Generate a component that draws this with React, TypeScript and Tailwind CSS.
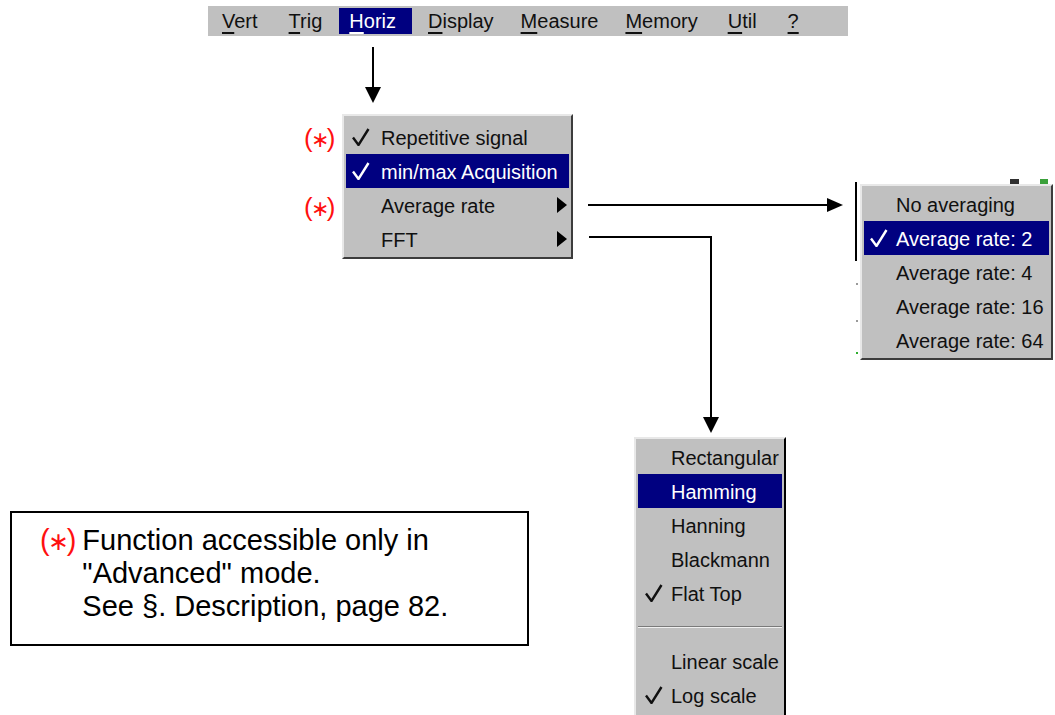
import React from "react";

type Item = {
  label: string;
  checked?: boolean;
  active?: boolean;
  arrow?: boolean;
};

const Check = ({ white }: { white?: boolean }) => (
  <svg width="18" height="18" viewBox="0 0 18 18">
    <path
      d="M1 9.5 L6.5 17 L16.5 1"
      fill="none"
      stroke={white ? "#ffffff" : "#101010"}
      strokeWidth="2.4"
    />
  </svg>
);

const Row = ({ item, gutter, pad }: { item: Item; gutter: string; pad: string }) => (
  <div
    className={
      "flex h-[34px] items-center leading-[34px] " +
      (item.active ? "bg-[#000080] text-white" : "text-[#101010]")
    }
  >
    <div className={"flex shrink-0 items-center " + gutter + " " + pad}>
      {item.checked && <Check white={item.active} />}
    </div>
    <span className="flex-1 whitespace-pre pt-[2px]">{item.label}</span>
    {item.arrow && (
      <svg width="10" height="16" viewBox="0 0 10 16" className="mr-[2px]">
        <path d="M0 0 L10 8 L0 16 Z" fill="#000" />
      </svg>
    )}
  </div>
);

const bevel =
  "absolute border-2 border-t-[#e8e8e8] border-l-[#e8e8e8] border-r-[#3c3c3c] border-b-[#3c3c3c] bg-[#c0c0c0]";

const horizMenu: Item[] = [
  { label: "Repetitive signal", checked: true },
  { label: "min/max Acquisition", checked: true, active: true },
  { label: "Average rate", arrow: true },
  { label: "FFT", arrow: true },
];

const averageMenu: Item[] = [
  { label: "No averaging" },
  { label: "Average rate: 2", checked: true, active: true },
  { label: "Average rate: 4" },
  { label: "Average rate: 16" },
  { label: "Average rate: 64" },
];

const fftWindows: Item[] = [
  { label: "Rectangular" },
  { label: "Hamming", active: true },
  { label: "Hanning" },
  { label: "Blackmann" },
  { label: "Flat Top", checked: true },
];

const fftScales: Item[] = [
  { label: "Linear scale" },
  { label: "Log scale", checked: true },
];

// red "(*)" marker, asterisk centred like in the manual
const Star = ({ className }: { className: string }) => (
  <span className={"whitespace-nowrap text-[#ff1010] " + className}>
    (<span className="mx-[-2px] text-[0.85em]">∗</span>)
  </span>
);

const MenuBar = () => (
  <div className="absolute left-[208px] top-[6px] flex h-[30px] w-[640px] items-center bg-[#c0c0c0] pl-[14px] text-[20px] leading-[26px] text-[#101010]">
    <span>
      <u className="decoration-2 underline-offset-[4px]">V</u>ert
    </span>
    <span className="ml-[31px]">
      <u className="decoration-2 underline-offset-[4px]">T</u>rig
    </span>
    <span className="ml-[17px] bg-[#000080] pl-[10px] pr-[16px] text-white">
      <u className="decoration-2 underline-offset-[4px]">H</u>oriz
    </span>
    <span className="ml-[16px]">
      <u className="decoration-2 underline-offset-[4px]">D</u>isplay
    </span>
    <span className="ml-[27px]">
      <u className="decoration-2 underline-offset-[4px]">M</u>easure
    </span>
    <span className="ml-[27px]">
      <u className="decoration-2 underline-offset-[4px]">M</u>emory
    </span>
    <span className="ml-[30px]">
      <u className="decoration-2 underline-offset-[4px]">U</u>til
    </span>
    <span className="ml-[31px]">
      <u className="decoration-2 underline-offset-[4px]">?</u>
    </span>
  </div>
);

const Connectors = () => (
  <svg className="pointer-events-none absolute left-0 top-0" width="1055" height="715">
    <g stroke="#000" strokeWidth="2" fill="none">
      <line x1="373" y1="47" x2="373" y2="88" />
      <line x1="588" y1="205" x2="829" y2="205" />
      <polyline points="589,237 711,237 711,419" />
    </g>
    <g fill="#000">
      <path d="M365 87 L381 87 L373 103 Z" />
      <path d="M827 198 L843 205 L827 212 Z" />
      <path d="M703 417 L719 417 L711 433 Z" />
    </g>
  </svg>
);

export default function App() {
  return (
    <div className="relative h-[715px] w-[1055px] overflow-hidden bg-white font-['Liberation_Sans',Arial,sans-serif]">
      <MenuBar />

      <Star className="absolute left-[304px] top-[125px] text-[26px] leading-[26px]" />
      <Star className="absolute left-[304px] top-[194px] text-[26px] leading-[26px]" />

      <div className={bevel + " left-[342px] top-[114px] h-[145px] w-[231px] px-[2px] pt-[4px] text-[20px]"}>
        {horizMenu.map((it) => (
          <Row key={it.label} item={it} gutter="w-[35px]" pad="pl-[6px]" />
        ))}
      </div>

      {/* bits of the scope screen behind the sub-menu */}
      <div className="absolute left-[855px] top-[182px] h-[79px] w-[2px] bg-black" />
      <div className="absolute left-[856px] top-[283px] h-[2px] w-[2px] bg-[#9a9a9a]" />
      <div className="absolute left-[856px] top-[320px] h-[2px] w-[2px] bg-[#9a9a9a]" />
      <div className="absolute left-[856px] top-[352px] h-[2px] w-[2px] bg-[#2fae2f]" />
      <div className="absolute left-[1010px] top-[179px] h-[5px] w-[9px] bg-[#303030]" />
      <div className="absolute left-[1040px] top-[179px] h-[5px] w-[8px] bg-[#3aa03a]" />

      <div className={bevel + " left-[860px] top-[184px] h-[176px] w-[193px] px-[2px] pt-[1px] text-[20px]"}>
        {averageMenu.map((it) => (
          <Row key={it.label} item={it} gutter="w-[32px]" pad="pl-[6px]" />
        ))}
      </div>

      <div className={bevel + " left-[634px] top-[437px] h-[300px] w-[152px] border-r-black px-[2px] pt-[1px] text-[20px]"}>
        {fftWindows.map((it) => (
          <Row key={it.label} item={it} gutter="w-[33px]" pad="pl-[7px]" />
        ))}
        <div className="flex h-[34px] flex-col justify-center">
          <div className="h-[2px] border-t border-t-[#7a7a7a] border-b border-b-[#f0f0f0]" />
        </div>
        {fftScales.map((it) => (
          <Row key={it.label} item={it} gutter="w-[33px]" pad="pl-[7px]" />
        ))}
      </div>

      <Connectors />

      <div className="absolute left-[10px] top-[511px] h-[135px] w-[519px] border-2 border-black pl-[28px] pt-[11px] text-[29px] leading-[33px] text-black">
        <div className="flex">
          <Star className="mr-[6px] shrink-0" />
          <div>
            Function accessible only in
            <br />
            "Advanced" mode.
            <br />
            See §. Description, page 82.
          </div>
        </div>
      </div>
    </div>
  );
}
